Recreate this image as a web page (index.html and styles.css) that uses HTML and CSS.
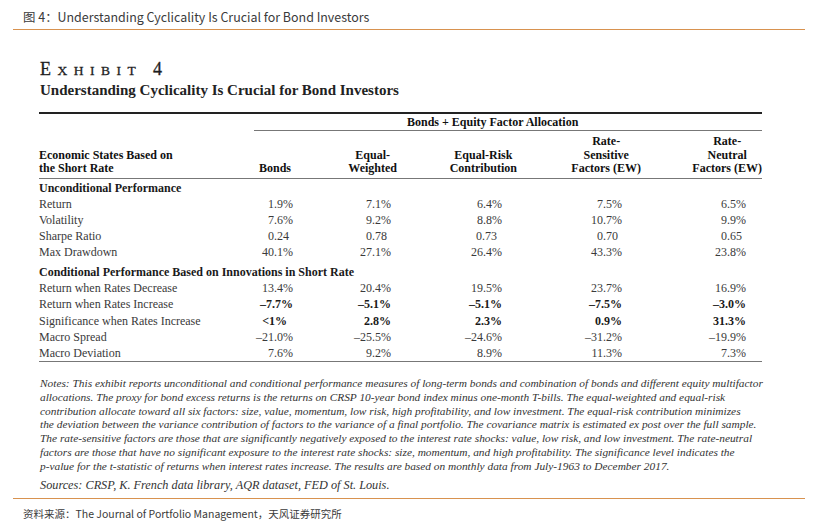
FILE: index.html
```html
<!DOCTYPE html>
<html lang="zh-CN">
<head>
<meta charset="utf-8">
<title>图 4：Understanding Cyclicality Is Crucial for Bond Investors</title>
<link rel="stylesheet" href="styles.css">
</head>
<body>
<div class="page">
  <header class="fig-title">图 4：Understanding Cyclicality Is Crucial for Bond Investors</header>

  <section class="exhibit">
    <h1 class="ex-label">E<span class="sc">xhibit</span> 4</h1>
    <h2 class="ex-title">Understanding Cyclicality Is Crucial for Bond Investors</h2>

    <table class="tbl">
      <colgroup>
        <col class="c-label">
        <col class="c-bonds">
        <col class="c-ew">
        <col class="c-erc">
        <col class="c-rs">
        <col class="c-rn">
      </colgroup>
      <thead>
        <tr class="row-top">
          <th class="blank"></th>
          <th class="span-head" colspan="5">Bonds + Equity Factor Allocation</th>
        </tr>
        <tr class="row-head">
          <th class="h-label">Economic States Based on<br>the Short Rate</th>
          <th class="h-num h-bonds"><span class="stack">Bonds</span></th>
          <th class="h-num"><span class="stack">Equal-<br>Weighted</span></th>
          <th class="h-num"><span class="stack">Equal-Risk<br>Contribution</span></th>
          <th class="h-num"><span class="stack">Rate-<br>Sensitive<br>Factors (EW)</span></th>
          <th class="h-num"><span class="stack">Rate-<br>Neutral<br>Factors (EW)</span></th>
        </tr>
      </thead>
      <tbody>
        <tr class="sec first"><td colspan="6">Unconditional Performance</td></tr>
        <tr>
          <td class="lbl">Return</td>
          <td class="v v1">1.9%</td><td class="v v2">7.1%</td><td class="v v3">6.4%</td><td class="v v4">7.5%</td><td class="v v5">6.5%</td>
        </tr>
        <tr>
          <td class="lbl">Volatility</td>
          <td class="v v1">7.6%</td><td class="v v2">9.2%</td><td class="v v3">8.8%</td><td class="v v4">10.7%</td><td class="v v5">9.9%</td>
        </tr>
        <tr>
          <td class="lbl">Sharpe Ratio</td>
          <td class="v v1 ratio">0.24</td><td class="v v2 ratio">0.78</td><td class="v v3 ratio">0.73</td><td class="v v4 ratio">0.70</td><td class="v v5 ratio">0.65</td>
        </tr>
        <tr>
          <td class="lbl">Max Drawdown</td>
          <td class="v v1">40.1%</td><td class="v v2">27.1%</td><td class="v v3">26.4%</td><td class="v v4">43.3%</td><td class="v v5">23.8%</td>
        </tr>
        <tr class="sec"><td colspan="6">Conditional Performance Based on Innovations in Short Rate</td></tr>
        <tr>
          <td class="lbl">Return when Rates Decrease</td>
          <td class="v v1">13.4%</td><td class="v v2">20.4%</td><td class="v v3">19.5%</td><td class="v v4">23.7%</td><td class="v v5">16.9%</td>
        </tr>
        <tr>
          <td class="lbl">Return when Rates Increase</td>
          <td class="v v1 b">–7.7%</td><td class="v v2 b">–5.1%</td><td class="v v3 b">–5.1%</td><td class="v v4 b">–7.5%</td><td class="v v5 b">–3.0%</td>
        </tr>
        <tr>
          <td class="lbl">Significance when Rates Increase</td>
          <td class="v v1 b lt">&lt;1%</td><td class="v v2 b">2.8%</td><td class="v v3 b">2.3%</td><td class="v v4 b">0.9%</td><td class="v v5 b">31.3%</td>
        </tr>
        <tr>
          <td class="lbl">Macro Spread</td>
          <td class="v v1">–21.0%</td><td class="v v2">–25.5%</td><td class="v v3">–24.6%</td><td class="v v4">–31.2%</td><td class="v v5">–19.9%</td>
        </tr>
        <tr class="last">
          <td class="lbl">Macro Deviation</td>
          <td class="v v1">7.6%</td><td class="v v2">9.2%</td><td class="v v3">8.9%</td><td class="v v4">11.3%</td><td class="v v5">7.3%</td>
        </tr>
      </tbody>
    </table>

    <div class="notes">
      <p class="note-text">Notes: This exhibit reports unconditional and conditional performance measures of long-term bonds and combination of bonds and different equity multifactor<br>allocations. The proxy for bond excess returns is the returns on CRSP 10-year bond index minus one-month T-bills. The equal-weighted and equal-risk<br>contribution allocate toward all six factors: size, value, momentum, low risk, high profitability, and low investment. The equal-risk contribution minimizes<br>the deviation between the variance contribution of factors to the variance of a final portfolio. The covariance matrix is estimated ex post over the full sample.<br>The rate-sensitive factors are those that are significantly negatively exposed to the interest rate shocks: value, low risk, and low investment. The rate-neutral<br>factors are those that have no significant exposure to the interest rate shocks: size, momentum, and high profitability. The significance level indicates the<br>p-value for the t-statistic of returns when interest rates increase. The results are based on monthly data from July-1963 to December 2017.</p>
      <p class="note-src">Sources: CRSP, K. French data library, AQR dataset, FED of St. Louis.</p>
    </div>
  </section>

  <footer class="source">资料来源：The Journal of Portfolio Management，天风证券研究所</footer>
</div>
</body>
</html>
```
FILE: styles.css
```css
* { box-sizing: border-box; }
html, body { margin: 0; padding: 0; background: #ffffff; }

.page {
  width: 823px;
  height: 526px;
  display: flex;
  flex-direction: column;
  overflow: hidden;
}

.fig-title {
  margin-left: 13px;
  width: 792px;
  padding: 8px 0 3px 10px;
  line-height: 18px;
  font-family: "Noto Sans CJK SC", "Noto Sans", sans-serif;
  font-size: 12.45px;
  color: #3a3a3a;
  border-bottom: 1px solid #d8924f;
  white-space: nowrap;
}

.exhibit {
  margin-left: 39px;
  width: 723px;
  display: flex;
  flex-direction: column;
  font-family: "Liberation Serif", "Times New Roman", serif;
  color: #2a2a2a;
}

.ex-label {
  margin: 29px 0 0 1px;
  font-size: 18px;
  line-height: 20px;
  font-weight: normal;
  letter-spacing: 0.36em;
  color: #1e1e1e;
  white-space: nowrap;
  -webkit-text-stroke: 0.3px #1e1e1e;
}
.ex-label .sc {
  font-size: 13.5px;
  text-transform: uppercase;
}

.ex-title {
  margin: 0 0 0 1px;
  font-size: 15px;
  line-height: 18px;
  font-weight: bold;
  color: #222;
  white-space: nowrap;
}

.tbl {
  margin-top: 13px;
  width: 723px;
  table-layout: fixed;
  border-collapse: separate;
  border-spacing: 0;
  font-size: 12px;
  color: #3a3a3a;
}
.c-label { width: 215px; }
.c-bonds { width: 39px; }
.c-ew { width: 104px; }
.c-erc { width: 120px; }
.c-rs { width: 124px; }
.c-rn { width: 121px; }

.tbl th, .tbl td { padding: 0; white-space: nowrap; }

.row-top th {
  border-top: 2px solid #222;
  line-height: 16px;
  font-size: 12px;
  color: #111;
}
.span-head {
  text-align: left;
  padding-left: 153px !important;
  border-bottom: 1px solid #777;
}

.row-head th {
  vertical-align: bottom;
  padding: 4px 0 2.5px;
  line-height: 13.5px;
  font-size: 12px;
  color: #111;
  border-bottom: 1px solid #777;
}
.h-label { text-align: left; }
.h-num { text-align: right; }
.h-bonds { padding-right: 2px !important; }
.stack {
  display: inline-block;
  text-align: center;
}

.sec td {
  padding-top: 4px;
  line-height: 16px;
  font-weight: bold;
  color: #1a1a1a;
}
.sec.first td { padding-top: 1px; }

.tbl tbody tr td.lbl,
.tbl tbody tr td.v {
  line-height: 16.1px;
}
.lbl { text-align: left; }
.v { text-align: right; }
.v1 { padding-right: 0 !important; }
.v2 { padding-right: 6px !important; }
.v3 { padding-right: 15px !important; }
.v4 { padding-right: 19px !important; }
.v5 { padding-right: 16px !important; }
.v1.ratio { padding-right: 4px !important; }
.v2.ratio { padding-right: 10px !important; }
.v3.ratio { padding-right: 20px !important; }
.v4.ratio { padding-right: 23px !important; }
.v5.ratio { padding-right: 20px !important; }
.v1.lt { padding-right: 6px !important; }
.b { font-weight: bold; color: #1a1a1a; }

.last td { border-bottom: 1px solid #777; }

.notes {
  margin: 15px 0 0 1px;
  font-style: italic;
  color: #333;
}
.note-text {
  margin: 0;
  font-size: 11.37px;
  line-height: 13.83px;
  white-space: nowrap;
}
.note-src {
  margin: 4px 0 0;
  font-size: 12.25px;
  line-height: 14px;
  white-space: nowrap;
}

.source {
  margin-top: auto;
  margin-bottom: 3px;
  margin-left: 13px;
  width: 792px;
  padding: 6px 0 0 10px;
  line-height: 18px;
  font-family: "Noto Sans CJK SC", "Noto Sans", sans-serif;
  font-size: 10.5px;
  color: #3a3a3a;
  border-top: 1px solid #d8924f;
  white-space: nowrap;
}
```
